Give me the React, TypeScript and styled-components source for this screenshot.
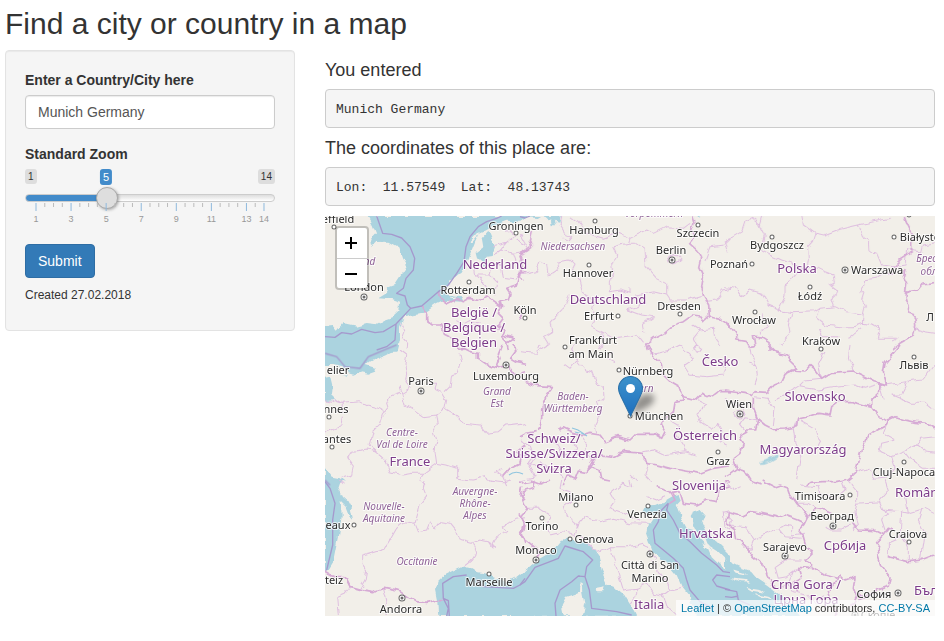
import React, { useState } from "react";
import styled, { createGlobalStyle } from "styled-components";

const GlobalStyle = createGlobalStyle`
  *, *::before, *::after { box-sizing: border-box; }
  body {
    margin: 0;
    background: #fff;
    color: #333;
    font: 14px/20px "Liberation Sans", Arial, sans-serif;
  }
`;

const Page = styled.div`
  padding: 7px 9px 25px 5px;
`;

const Title = styled.h1`
  margin: 0 0 10px;
  font-size: 30px;
  line-height: 33px;
  font-weight: 400;
`;

const Columns = styled.div`
  display: grid;
  grid-template-columns: calc(100% / 3 - 20px) minmax(0, 1fr);
  gap: 30px;
  align-items: start;
`;

const Sidebar = styled.form`
  padding: 19px;
  background: #f5f5f5;
  border: 1px solid #e3e3e3;
  border-radius: 4px;
  box-shadow: inset 0 1px 1px rgba(0, 0, 0, 0.05);
`;

const Field = styled.div`
  margin-bottom: 15px;
`;

const Label = styled.label`
  display: block;
  margin-bottom: 5px;
  font-weight: 700;
`;

const TextInput = styled.input`
  display: block;
  width: 100%;
  height: 34px;
  padding: 6px 12px;
  font: inherit;
  color: #555;
  background: #fff;
  border: 1px solid #ccc;
  border-radius: 4px;
  box-shadow: inset 0 1px 1px rgba(0, 0, 0, 0.08);
`;

const Slider = styled.div`
  height: 60px;
`;

const BadgeRow = styled.div`
  position: relative;
  display: flex;
  justify-content: space-between;
  align-items: flex-start;
  height: 18px;
`;

const Badge = styled.span`
  padding: 1px 3px;
  font-size: 10px;
  line-height: 13px;
  border-radius: 3px;
  background: #ddd;
`;

const ValueTrack = styled.div`
  position: absolute;
  inset: 0 11px auto;
`;

const ValueBadge = styled.output`
  position: absolute;
  transform: translateX(-50%);
  padding: 1px 3px;
  font-size: 11px;
  line-height: 14px;
  border-radius: 3px;
  color: #fff;
  background: #428bca;
`;

const Range = styled.input`
  display: block;
  width: 100%;
  height: 22px;
  margin: 0;
  appearance: none;
  background: none;
  cursor: pointer;

  &::-webkit-slider-runnable-track {
    height: 8px;
    border: 1px solid #ccc;
    border-radius: 8px;
    background:
      linear-gradient(#428bca, #428bca) 0 0 / var(--fill) 100% no-repeat border-box border-box,
      linear-gradient(#ddd, #fff);
  }

  &::-webkit-slider-thumb {
    appearance: none;
    width: 22px;
    height: 22px;
    margin-top: -8px;
    border: 1px solid #aaa;
    border-radius: 50%;
    background: #dedede;
    box-shadow: 1px 1px 3px rgba(0, 0, 0, 0.3);
  }
`;

const Scale = styled.svg`
  display: block;
  width: calc(100% - 22px);
  height: 20px;
  margin: -6px 11px 0;
  overflow: visible;
  font-size: 9px;
  fill: #999;
  pointer-events: none;
`;

const SubmitButton = styled.button`
  display: block;
  height: 34px;
  padding: 6px 12px;
  font: inherit;
  color: #fff;
  background: #337ab7;
  border: 1px solid #2e6da4;
  border-radius: 4px;
  cursor: pointer;
`;

const Created = styled.p`
  margin: 10px 0 9px;
  font-size: 12px;
  line-height: 14px;
`;

const Main = styled.main`
  min-width: 0;
`;

const Heading = styled.h2`
  margin: 10px 0 9px;
  font-size: 18px;
  line-height: 20px;
  font-weight: 400;
`;

const Output = styled.pre`
  margin: 0 0 10px;
  padding: 10px 10px 8px;
  overflow: auto;
  font: 13px/19px "Liberation Mono", "Courier New", monospace;
  background: #f5f5f5;
  border: 1px solid #ccc;
  border-radius: 4px;
`;

const MapFrame = styled.section`
  position: relative;
  height: 400px;
  overflow: hidden;
  background: #f2efe9;
`;

const MapCanvas = styled.svg`
  display: block;
  width: 100%;
  height: 100%;
`;

const ZoomControl = styled.div`
  position: absolute;
  top: 10px;
  left: 10px;
  display: grid;
  width: 34px;
  border: 2px solid rgba(0, 0, 0, 0.2);
  border-radius: 4px;
  background: #fff;
  background-clip: padding-box;
`;

const ZoomButton = styled.button`
  display: grid;
  place-items: center;
  height: 30px;
  padding: 0 1px 0 0;
  border: 0;
  color: #000;
  background: none;
  cursor: pointer;

  & + & { border-top: 1px solid #ccc; }
`;

const Attribution = styled.div`
  position: absolute;
  right: 0;
  bottom: 0;
  padding: 0 5px;
  font-size: 11px;
  line-height: 16px;
  white-space: nowrap;
  background: rgba(255, 255, 255, 0.7);
`;

const Link = styled.a`
  color: #0078a8;
  text-decoration: none;
`;

type LabelKind = "city" | "country" | "region";

const MapLabel = styled.text<{ $kind: LabelKind }>`
  font-family: "Noto Sans", sans-serif;
  font-size: ${(p) => ({ city: 11, country: 13, region: 10 })[p.$kind]}px;
  font-style: ${(p) => (p.$kind === "region" ? "italic" : "normal")};
  fill: ${(p) => ({ city: "#2b2b2b", country: "#7d3c8a", region: "#8f6297" })[p.$kind]};
  stroke: rgba(255, 255, 255, 0.75);
  stroke-width: 2px;
  stroke-linejoin: round;
  paint-order: stroke;
  text-anchor: middle;
`;

interface Tile {
  x: number;
  y: number;
  sea?: string;
  land?: string;
  sealine?: string;
  country?: string;
  region?: string;
}

/* Each tile is stored at three times map scale and placed by its corner. */
const tiles: Tile[] = [
  {
    x: -5, y: -6,
    sea: "M140 18L150 30 158 45 168 70 152 88 148 100 160 108 172 96 205 95 235 112 246 145 257 165 252 182 235 208 222 228 200 236 205 245 178 262 208 264 240 275 238 300 215 322 190 330 165 345 140 342 110 350 85 345 66 343 50 362 36 345 15 347V425H232L240 390 240 350 252 322 300 312 325 298 350 280 366 272 430 275 425 262 385 258 375 242 395 210 425 185 440 158 453 125 465 95 475 72 500 60 525 45 560 32 600 35 615 25V18Z M485 85L505 62 525 110 515 138 500 140 490 158 474 145 470 130 490 115Z M478 165L505 160 500 166Z",
    land: "M450 92L470 70 480 66 455 96Z M385 266L410 262 405 268Z",
    sealine: "M170 18L188 70 215 73 245 84 270 110 284 145 280 180 258 205 250 235 230 250 255 258 262 285 272 295 305 288 355 245 385 225 410 190 432 155 438 110 450 80 475 50 500 35 530 25 545 18M15 380L45 382 65 368 95 372 125 358 165 368 190 365 228 342 272 295M228 342L225 390 200 410 170 420",
    country: "M305 288L320 310 320 330 340 345 362 345 370 370 400 385 410 405 430 420M355 245L370 270 385 280 410 268 430 275 450 265 475 272 500 258 525 275 545 290 535 310 550 325 535 345 555 360 545 380 560 395 565 420M545 290L540 275 565 270 570 250 560 235 590 225 600 190 615 190M550 375L580 385 560 400",
    region: "M466 170L470 195 510 195 520 160 545 170 550 205 585 210 600 190M520 110L560 100 585 75 560 55M545 120L580 130 590 160 615 150M520 138L545 120 560 100M470 195L490 220 505 250M510 195L530 215 525 250M412 335L440 350 470 345 500 365 540 355M430 340L450 330 480 340M245 340L255 365 247 385 260 400 258 420M590 90L615 105M575 130L615 125",
  },
  {
    x: 195, y: -6,
    sea: "M0 18H60L50 24 20 22 0 35Z M68 18H122L118 35 105 32 108 46 98 46 95 32 80 30Z M530 18H542L536 26Z",
    sealine: "M0 20L15 24 30 18",
    country: "M34 65L28 90 35 110 15 125 0 135M15 120L0 145 8 165 0 205 10 212M515 18L522 40 515 62 524 80 508 100 530 120 542 145 536 170 550 200 545 230 552 262 566 285 568 318 600 325 630 350M568 318L550 335 540 318 518 315 490 335 460 345 430 370 400 385 378 400 385 420M0 290L8 310 0 330",
    region: "M0 72L25 115M125 18L120 45 135 70 155 80 145 92 128 84M155 20L175 35 190 60 215 75 250 85 290 70 330 85 380 60 400 70 440 50 490 55 510 40M330 85L325 100 278 110 290 135 275 160 278 190 268 215 268 245 300 240M325 100L350 100 375 118 378 170 410 205 440 220 440 255 400 245 350 255 380 280 350 290 325 300 365 315 400 320 370 340 375 375M0 195L45 185 60 155 80 165 85 200 115 180 110 155 150 150 165 165 155 185 180 210 190 250 220 270 215 300 230 320 215 350M440 145L460 130 480 150 460 166 445 158ZM440 255L450 270 500 270 550 255M150 250L140 285 120 305 90 340 95 365 70 380 85 405 60 420M215 350L245 365 280 385 310 380 350 375 370 400M245 365L250 400 235 420M555 150L570 110 610 105 630 85M552 275L590 270 610 240 630 235M300 240L330 250 330 235M518 345L540 360 520 385 530 405 515 420M540 360L580 355 585 385 600 405",
  },
  {
    x: 400, y: -6,
    country: "M538 18L548 45 560 70 560 125 530 145 505 170M540 180L535 200 545 220 540 260 552 300 570 325 572 350 565 375 530 395 500 420M540 248L575 240 590 222 630 218M0 343L20 355 35 375 35 390 65 395 75 412 90 410 85 378 115 382 135 395 135 420",
    region: "M110 20L102 45 118 75 105 120 125 130 170 150 230 170 280 175M230 18L235 45 270 70 262 95 248 110 250 150 245 185M270 70L300 75 345 58 400 45 470 30 500 25M400 45L415 85 430 95 432 125 455 130 470 165 505 170M505 170L540 165 545 120 590 125 595 105 630 98M245 180L225 175 200 210 180 225 180 260 160 300 200 308 270 305 285 295 330 290 360 305 412 312M280 175L300 185 325 195 328 220 315 225 335 240 330 260 318 270 325 290M412 312L418 285 410 270 418 245 405 245 420 225 418 210 450 205 475 190 520 190M0 230L30 235 50 260 75 240 110 250 130 285 165 300M10 130L0 90 25 80 50 65 60 35 80 25 105 45M200 310L190 345 195 370 165 400M285 295L275 325 300 345 350 350 385 350 412 340 415 310M280 360L290 380 340 380M412 340L440 345 465 360 460 385 515 385M370 385L410 355M565 355L600 365 630 370M110 310L125 345 105 370M500 395L520 385",
  },
  {
    x: -5, y: 129,
    sea: "M15 0H236L225 14 200 28 170 40 150 50 140 60 168 68 165 80 148 86 125 82 100 92 85 88 80 95 15 80Z M15 95L30 92 38 125 36 150 48 162 15 165Z M15 370L25 380 35 395 60 400 66 410 52 420H15Z",
    land: "M15 60L40 60 80 70 88 90 40 95 15 90Z",
    sealine: "M15 25L50 35 75 65 120 70 145 35 200 12 230 0M15 405L30 420",
    country: "M425 8L450 20 475 25 475 40 505 60 530 70 560 60 575 75M545 0L535 25 540 40 530 68M575 0L590 15 572 40 590 50 615 55M575 72L585 90 615 80M548 395L570 370 600 355 605 335 590 320 615 300",
    region: "M240 15L260 30 255 60 260 90 255 110 270 130 245 145 240 120M240 145L210 155 200 175 205 190 190 210 180 240 160 260 150 300 165 320M245 145L255 180 275 190 310 215 350 210 375 190 380 165 365 140 345 130 350 115 325 115M375 140L390 125 395 90 415 85 425 50 420 25M375 190L400 205 430 235 480 240 500 265 535 260 560 240 600 235 615 245M350 210L355 235 340 260 350 290 345 320 350 355 380 360 410 370 410 400 455 405 490 395 515 410M35 165L65 175 120 170 140 180 165 185 200 205M70 215L65 240 45 250 15 262M45 162L70 178 68 205M165 320L145 315 100 322 80 335 100 360 95 390 65 400M165 320L195 345 210 380 250 390 280 385 310 385 350 355M310 385L300 400 315 420M548 395L530 385 545 370M548 395L560 420M15 165L40 170",
  },
  {
    x: 195, y: 129,
    country: "M0 105L30 115 55 122 100 125 80 150 65 190 65 225 55 255M115 255L130 248 160 262 190 270 210 265 240 270 255 290 290 275 330 285 350 265 400 265 425 280 435 260 420 235 440 220 460 200 465 170 490 165 485 150M385 0L400 35 425 60 425 85 445 105 480 125 490 155 530 165 550 145 575 155 595 140 630 140M0 275L20 265 50 260M200 380L220 345 245 330 280 335 310 320 370 325 380 355 410 360 450 370 480 375 540 385 580 370 630 362M130 420L145 390 165 400 175 375 200 380 215 365 240 375 245 400 270 405M0 330L20 335",
    region: "M60 0L50 25 0 20M130 55L150 70 170 45 195 75 215 80 230 120 250 130 252 160 235 175 245 200 225 240 230 265M170 45L155 15 165 0M280 15L265 40 285 50M390 30L450 15 480 0M480 0L520 40 490 60 510 90 560 95M560 95L610 90 620 70 605 55 630 40M515 10L530 0 545 10 535 22ZM440 220L475 240 470 270 490 300 495 320 530 330M370 320L400 315 430 330 495 320M530 165L560 180 530 205 540 230 570 250 590 235M590 235L610 260 600 290 620 300M0 285L30 300 40 330 25 350 60 370M80 280L115 300 130 330 170 320 190 340M150 290L170 305 165 330M180 270L200 300 195 330 220 345M20 310L50 330 30 360 45 395 0 405M60 350L90 375 110 370 130 400M370 345L385 360 375 390 395 410M330 390L350 410",
  },
  {
    x: 400, y: 129,
    sea: "M102 353L120 346 160 329 161 335 135 350 118 356 103 357Z",
    country: "M130 0L150 20 185 30 195 48 218 70 180 88 170 110 145 120 125 142 90 140 82 155 60 145 0 138M180 88L200 75 240 78 255 62 275 80 290 100 320 82 385 78 410 90 450 110 485 120M525 0L480 55 475 85 485 120 462 115 460 150 440 165 440 187 380 170 340 170 320 185 315 210 280 205 250 215 215 222 212 245 180 252 145 253 120 240 98 222 85 190 85 160M440 187L460 215 490 225 485 240 430 270 405 325 390 385 370 402 330 410 290 410 255 412 245 420M490 225L510 215 540 225 570 232 605 235 630 250M98 222L92 255 60 255 65 265 45 275 55 290 45 325 25 340 35 370 60 378 80 410 110 420M35 370L15 385 0 395",
    region: "M70 0L75 30 95 60 100 90 90 120M70 55L95 60M90 155L130 160 140 180 150 195 145 240M150 165L180 150 220 125 280 135 345 125 390 120 415 130 450 120M220 125L240 105 290 100M375 0L370 40 385 78M290 100L280 60 300 20M462 115L475 160M485 120L540 110 545 120 530 150 500 150M500 150L560 175 600 175 630 200M215 222L205 250 210 290 225 340 215 410M225 225L270 250 275 270 290 290 280 310M98 222L60 215 45 235 60 255M485 240L475 265 510 285 470 295 465 320 500 335 540 320 575 300 590 280 630 275M575 300L600 320 630 325M540 320L560 345 595 370 630 370M500 335L510 370 490 395M0 160L50 185 60 210M25 200L40 195 55 205 50 218 35 220ZM390 385L430 370 450 400 490 395M545 110L595 105 630 60",
  },
  {
    x: -5, y: 264,
    sea: "M15 0H52L60 10 55 25 66 48 82 62 92 82 100 120 92 112 80 80 62 62 65 110 58 165 48 215 42 245 25 272 15 278Z M358 408L355 365 348 330 352 302 370 285 400 270 425 258 455 265 470 275 495 280 520 292 535 298 560 305 590 290 615 270V408Z M47 0L75 8 65 0Z",
    sealine: "M15 5L30 25 45 70 38 120 38 195 20 270M388 408L385 362 370 355 368 310 400 290 440 285M470 300L490 320 580 325 600 315 615 295M370 355L385 385 380 408",
    country: "M15 275L40 290 75 290 90 320 120 328 160 335 190 325 205 328 240 335 262 350 290 365 320 370 355 362 385 362M600 100L615 130 605 160 615 190M605 20L600 45 615 60",
    region: "M55 0L70 15M315 0L310 25 320 50 300 75 295 95 285 130 255 125M285 130L295 155 320 150 330 125 345 150 365 125 390 130 410 155 420 180 455 190 480 180 505 185 515 200 530 170 560 155 550 140 585 115 615 110M255 125L230 145 210 180 195 205 160 215 125 225 125 250 140 270 135 300 120 325M460 190L470 215 455 240 430 260M90 320L75 340 50 350 55 408M190 325L200 360 192 385 200 408M505 0L550 5 570 0M505 185L525 200",
  },
  {
    x: 195, y: 264,
    sea: "M0 285L15 268 40 248 75 228 105 205 125 180 148 172 175 185 200 190 222 205 236 225 240 245 245 270 260 300 262 315 285 325 310 345 325 370 345 395 352 410H0Z M385 130L378 160 386 182 395 210 415 232 445 255 470 285 485 320 505 345 522 380 528 410H630V282L605 260 575 232 565 208 545 190 560 195 535 170 520 150 500 145 490 125 480 100 470 75 482 62 475 45 455 50 435 62 405 75 380 76 370 95 400 105 415 100 395 130Z M512 112L520 88 538 92 554 110 545 128 562 165 590 185 630 225V250L600 230 570 205 560 180 535 158Z",
    land: "M182 305L188 312 190 340 196 370 188 408H132L125 375 138 350 165 342 180 335Z M230 326L254 322 250 334 232 334Z M505 110L515 118 512 130 525 150 510 140Z M558 190L590 210 620 240 612 242 585 220Z M590 232L620 262 612 262Z",
    sealine: "M0 315L15 305 45 262 90 245 115 235 135 198 190 215 218 240 200 260 195 290 208 330 215 385 290 395 335 405M108 408L105 370 120 330 155 305 175 288 195 290M415 125L400 150 405 190 430 210 460 235 490 265 500 300 510 330 540 365 580 385M445 70L440 90 460 120 480 160 510 185 545 220 590 255 610 275 630 278M630 290L590 285 578 300 590 318 630 330M445 70L420 95 415 125",
    country: "M0 0L15 10 45 5 40 25 10 35 5 50 20 85 5 110 15 140 5 170 30 190 60 215 45 240M445 72L465 60 455 40 480 35 490 70 530 75 560 60 590 65 600 30 630 20M30 0L60 12 90 0M455 40L445 30 410 20",
    region: "M125 0L120 25 150 35 155 60 130 80 140 110 165 125 175 145M165 160L175 130 190 110 240 125 280 115 330 128 385 130M330 0L335 20 305 10 270 40 285 65 270 85 300 95 360 120M385 50L410 60 435 50M15 85L60 85 90 105 80 140 90 165 130 155 175 165M175 165L215 200 240 215 270 200 320 200 350 195 370 190 385 215 410 240M270 200L285 250 295 280 310 330 350 325 350 345 330 370M395 240L415 270 435 300 450 330 490 320M450 330L430 345 440 380 470 408M350 325L380 310 400 340 430 345M630 95L610 100 615 140 630 150M375 100L395 120",
  },
  {
    x: 400, y: 264,
    sea: "M0 238L20 250 45 262 75 272 95 295 130 318 165 345 200 375 225 408H0Z",
    land: "M25 268L60 278 70 284 35 278Z M15 295L60 300 80 308 45 307Z M60 320L105 328 120 338 80 332Z M90 342L130 350 150 360 110 352Z",
    sealine: "M0 328L35 335 40 360 75 375M0 350L20 352 40 348",
    country: "M10 98L5 130 30 150 35 175 65 205 85 230 120 260 130 300 150 320M10 98L50 108 75 95 110 100 160 112 180 105 220 120 240 130 250 110 230 85 215 70 195 40 190 25 165 15 150 20 110 0M240 130L220 150 235 170 245 205 265 215 240 240 260 255 250 265 220 262 230 295 205 310 215 335M250 110L270 85 300 90 320 100M260 260L300 285 335 295 345 285 360 300 390 290 385 325 395 350 430 345M385 130L400 150 450 152 475 165 455 185 470 205 455 225 465 255 495 290 490 315 460 325 435 345 400 360M475 165L490 145 505 150M485 230L510 235 550 245 590 240 630 225M0 5L15 10M335 295L310 335 320 370 340 390 330 408M395 350L380 380",
    region: "M5 105L20 120 15 135 60 140 85 180 75 205 50 190M85 180L115 165 160 145 185 135 200 140 200 165 240 160M160 145L180 170 230 175M150 260L180 240 230 240M150 260L160 295 185 290 205 275 215 265M215 70L250 70 270 85M225 15L280 20 285 45 330 55M330 55L360 30 350 0M395 70L460 65 470 90 490 100 470 120 480 150M395 70L390 100 400 130 385 150M470 90L530 95 550 100 600 85 630 100M530 95L525 170 490 185 490 235M530 170L550 200 550 240M590 90L580 120 600 160 590 235M300 140L320 150 350 150 380 135M370 0L395 30 395 70M480 0L490 30 460 65M0 10L30 30 50 20M160 330L190 310 205 335 240 345M245 345L270 370 300 350M550 100L540 40 520 20M205 275L190 310",
  },
];

const labels: [string, number, number, LabelKind][] = [
  ["effield", 13, 7, "city"], ["London", 39, 75, "city"], ["Rotterdam", 143, 78, "city"], ["Groningen", 191, 14, "city"],
  ["Hamburg", 269, 18, "city"], ["Hannover", 263, 61, "city"], ["Berlin", 346, 38, "city"], ["Szczecin", 373, 21, "city"],
  ["Bydgoszcz", 452, 33, "city"], ["Poznań", 404, 52, "city"], ["Białystok", 598, 25, "city"], ["Warszawa", 552, 58, "city"],
  ["Łódź", 485, 84, "city"], ["Wrocław", 429, 108, "city"], ["Kraków", 496, 129, "city"], ["Львів", 589, 153, "city"],
  ["Л", 605, 105, "city"], ["Köln", 200, 98, "city"], ["Erfurt", 274, 104, "city"], ["Dresden", 354, 94, "city"],
  ["Frankfurt", 268, 128, "city"], ["am Main", 266, 142, "city"], ["Nürnberg", 323, 159, "city"], ["Luxembourg", 181, 164, "city"],
  ["Paris", 96, 169, "city"], ["elier", 13, 158, "city"], ["nnes", 11, 197, "city"], ["antes", 12, 227, "city"],
  ["München", 334, 204, "city"], ["Wien", 414, 192, "city"], ["Graz", 393, 249, "city"], ["Cluj-Napoca", 579, 260, "city"],
  ["Milano", 251, 285, "city"], ["Torino", 217, 314, "city"], ["Genova", 269, 327, "city"], ["Venezia", 322, 302, "city"],
  ["Monaco", 211, 338, "city"], ["Marseille", 164, 370, "city"], ["Andorra", 76, 397, "city"], ["eaux", 13, 313, "city"],
  ["teiz", 9, 368, "city"], ["Città di San", 325, 353, "city"], ["Marino", 325, 366, "city"], ["Timișoara", 495, 284, "city"],
  ["Београд", 507, 304, "city"], ["Craiova", 583, 322, "city"], ["Sarajevo", 460, 335, "city"], ["София", 549, 382, "city"],
  ["Скопје", 553, 403, "city"],
  ["Nederland", 170, 53, "country"], ["België /", 149, 101, "country"], ["Belgique /", 149, 116, "country"],
  ["Belgien", 149, 131, "country"], ["Deutschland", 283, 88, "country"], ["Polska", 472, 57, "country"],
  ["Česko", 395, 150, "country"], ["Slovensko", 490, 185, "country"], ["Österreich", 380, 224, "country"],
  ["Magyarország", 478, 238, "country"], ["France", 85, 250, "country"], ["Schweiz/", 229, 227, "country"],
  ["Suisse/Svizzera/", 229, 242, "country"], ["Svizra", 229, 257, "country"], ["Slovenija", 374, 274, "country"],
  ["Hrvatska", 381, 322, "country"], ["Italia", 324, 393, "country"], ["Србија", 520, 334, "country"],
  ["România", 597, 281, "country"], ["Crna Gora /", 481, 373, "country"], ["Црна Гора", 481, 388, "country"],
  ["България", 619, 379, "country"],
  ["England", 32, 49, "region"], ["Niedersachsen", 248, 34, "region"], ["Vorpommern", 329, 1, "region"],
  ["Брестская", 616, 46, "region"], ["область", 616, 59, "region"],
  ["Baden-", 248, 184, "region"], ["Württemberg", 248, 196, "region"], ["Bayern", 313, 176, "region"],
  ["Grand", 172, 179, "region"], ["Est", 172, 191, "region"], ["Centre-", 77, 220, "region"],
  ["Val de Loire", 77, 232, "region"], ["Nouvelle-", 59, 294, "region"], ["Aquitaine", 59, 306, "region"],
  ["Auvergne-", 150, 279, "region"], ["Rhône-", 150, 291, "region"], ["Alpes", 150, 303, "region"],
  ["Occitanie", 92, 349, "region"],
];

const towns = [
  [9, 11], [144, 66], [191, 17], [270, 5], [264, 49], [373, 9], [447, 21], [427, 48], [569, 21], [485, 71], [430, 96],
  [496, 133], [589, 141], [200, 102], [293, 100], [355, 98], [240, 131], [294, 154], [305, 200], [4, 201], [7, 231],
  [393, 236], [579, 246], [251, 289], [217, 302], [245, 323], [323, 290], [164, 358], [29, 309], [525, 279], [584, 326], [584, -1],
];

const capitals = [
  [39, 81], [347, 44], [520, 54], [181, 149], [96, 175], [415, 198], [211, 344], [77, 382], [325, 338], [508, 310], [460, 340], [573, 377], [530, 399],
];

const EuropeMap = () => (
  <MapCanvas viewBox="0 0 610 400" preserveAspectRatio="xMidYMid slice" role="img" aria-label="Map of central Europe">
    <defs>
      <filter id="rough" filterUnits="userSpaceOnUse" x="-10" y="-10" width="630" height="420" colorInterpolationFilters="sRGB">
        <feTurbulence type="fractalNoise" baseFrequency="0.13" numOctaves="1" seed="4" />
        <feDisplacementMap in="SourceGraphic" scale="7" xChannelSelector="R" yChannelSelector="G" />
      </filter>
      <filter id="soft" x="-50%" y="-50%" width="200%" height="200%">
        <feGaussianBlur stdDeviation="3" />
      </filter>
      <linearGradient id="pin" x1="0" y1="0" x2="0" y2="1">
        <stop offset="0" stopColor="#3d92cb" />
        <stop offset="1" stopColor="#1e6fbf" />
      </linearGradient>
    </defs>
    <rect width="610" height="400" fill="#f2efe9" />
    <g filter="url(#rough)" strokeLinejoin="round" fill="none">
      {tiles.map((t) => (
        <g key={`${t.x},${t.y}`} transform={`translate(${t.x} ${t.y}) scale(.33333)`}>
          <path d={t.sea} fill="#abd3df" />
          <path d={t.land} fill="#f2efe9" />
        </g>
      ))}
      {tiles.map((t) => (
        <g key={`${t.x},${t.y}`} transform={`translate(${t.x} ${t.y}) scale(.33333)`}>
          <path d={t.region} stroke="#dfbfe0" strokeWidth="3" />
          <path d={t.country} stroke="#d6aad5" strokeWidth="5" />
        </g>
      ))}
    </g>
    {tiles.map((t) => (
      <g key={`${t.x},${t.y}`} transform={`translate(${t.x} ${t.y}) scale(.33333)`}>
        <path d={t.sealine} fill="none" stroke="#a599cd" strokeWidth="4" strokeLinejoin="round" />
      </g>
    ))}
    <path d="M184 259Q190 254 198 258M247 212L253 214 262 220M250 216L258 218" fill="none" stroke="#8fc5df" strokeWidth="1" />
    <g fill="#fff" stroke="#666" strokeWidth="1">
      {towns.map(([x, y]) => <circle key={`${x},${y}`} cx={x} cy={y} r="2" />)}
      {capitals.map(([x, y]) => (
        <g key={`${x},${y}`}>
          <circle cx={x} cy={y} r="3" />
          <circle cx={x} cy={y} r="1" fill="#555" />
        </g>
      ))}
    </g>
    {labels.map(([name, x, y, kind]) => (
      <MapLabel key={`${name}${y}`} x={x} y={y} $kind={kind}>{name}</MapLabel>
    ))}
    <g transform="translate(293 160)">
      <path d="M13 39L18 24Q28 14 36 20 38 28 26 33Z" fill="#000" opacity=".4" filter="url(#soft)" />
      <path
        d="M12.5.5C5.9.5.5 5.9.5 12.6c0 2.8 1.4 5.9 2.2 7.4L12.5 40l9.8-20c.8-1.5 2.2-4.6 2.2-7.4C24.5 5.9 19.1.5 12.5.5Z"
        fill="url(#pin)"
        stroke="#2a70a8"
      />
      <circle cx="12.5" cy="12.5" r="4.5" fill="#fff" />
    </g>
  </MapCanvas>
);

const MIN = 1;
const MAX = 14;
const percent = (v: number) => ((v - MIN) / (MAX - MIN)) * 100;
const majors = [1, 3, 5, 7, 9, 11, 13, 14];
const minors = [0, 1, 2, 3, 4, 5].flatMap((i) => [1.5, 2, 2.5].map((s) => i * 2 + s)).concat(13.5);

export default function App() {
  const [place, setPlace] = useState("Munich Germany");
  const [submitted, setSubmitted] = useState("Munich Germany");
  const [zoom, setZoom] = useState(5);
  const step = (by: number) => setZoom((z) => Math.min(MAX, Math.max(MIN, z + by)));

  return (
    <Page>
      <GlobalStyle />
      <Title>Find a city or country in a map</Title>
      <Columns>
        <Sidebar onSubmit={(e) => { e.preventDefault(); setSubmitted(place); }}>
          <Field>
            <Label htmlFor="place">Enter a Country/City here</Label>
            <TextInput id="place" type="text" value={place} onChange={(e) => setPlace(e.target.value)} />
          </Field>
          <Field>
            <Label htmlFor="zoom">Standard Zoom</Label>
            <Slider>
              <BadgeRow>
                <Badge>{MIN}</Badge>
                <ValueTrack>
                  <ValueBadge htmlFor="zoom" style={{ left: `${percent(zoom)}%` }}>{zoom}</ValueBadge>
                </ValueTrack>
                <Badge>{MAX}</Badge>
              </BadgeRow>
              <Range
                id="zoom"
                type="range"
                min={MIN}
                max={MAX}
                value={zoom}
                onChange={(e) => setZoom(Number(e.target.value))}
                style={{ "--fill": `${percent(zoom)}%` } as React.CSSProperties}
              />
              <Scale aria-hidden="true">
                {minors.map((v) => (
                  <line key={v} x1={`${percent(v)}%`} x2={`${percent(v)}%`} y1="0" y2="4" stroke="#bbb" />
                ))}
                {majors.map((v) => (
                  <g key={v}>
                    <line x1={`${percent(v)}%`} x2={`${percent(v)}%`} y1="0" y2="8" stroke="#8fb9dd" />
                    <text x={`${percent(v)}%`} y="19" textAnchor="middle">{v}</text>
                  </g>
                ))}
              </Scale>
            </Slider>
          </Field>
          <SubmitButton type="submit">Submit</SubmitButton>
          <Created>Created 27.02.2018</Created>
        </Sidebar>
        <Main>
          <Heading>You entered</Heading>
          <Output>{submitted}</Output>
          <Heading>The coordinates of this place are:</Heading>
          <Output>{"Lon:  11.57549  Lat:  48.13743"}</Output>
          <MapFrame>
            <EuropeMap />
            <ZoomControl>
              <ZoomButton type="button" aria-label="Zoom in" onClick={() => step(1)}>
                <svg width="12" height="12" stroke="#000" strokeWidth="2"><path d="M0 6H12M6 0V12" /></svg>
              </ZoomButton>
              <ZoomButton type="button" aria-label="Zoom out" onClick={() => step(-1)}>
                <svg width="12" height="12" stroke="#000" strokeWidth="2"><path d="M0 6H12" /></svg>
              </ZoomButton>
            </ZoomControl>
            <Attribution>
              <Link href="#leaflet">Leaflet</Link> | © <Link href="#openstreetmap">OpenStreetMap</Link> contributors,{" "}
              <Link href="#license">CC-BY-SA</Link>
            </Attribution>
          </MapFrame>
        </Main>
      </Columns>
    </Page>
  );
}
